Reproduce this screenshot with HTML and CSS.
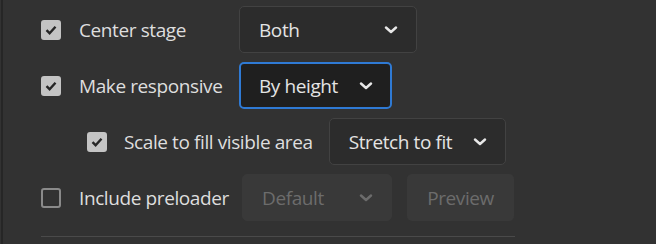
FILE: index.html
```html
<!DOCTYPE html>
<html lang="en">
<head>
    <meta charset="UTF-8">
    <meta name="viewport" content="width=device-width, initial-scale=1.0">
    <title>Publish Settings</title>
    <link rel="stylesheet" href="styles.css">
</head>
<body>
    <div class="panel">
        <div class="row">
            <span class="checkbox checked"><svg viewBox="0 0 12 10" width="12" height="10"><path d="M1.5 5.2 L4.6 8.2 L10.5 1.8" /></svg></span>
            <span class="label wide">Center stage</span>
            <div class="select w-both"><span>Both</span><svg class="chev" viewBox="0 0 14 8" width="14" height="8"><path d="M2 1.5 L7 6 L12 1.5" /></svg></div>
        </div>
        <div class="row">
            <span class="checkbox checked"><svg viewBox="0 0 12 10" width="12" height="10"><path d="M1.5 5.2 L4.6 8.2 L10.5 1.8" /></svg></span>
            <span class="label wide">Make responsive</span>
            <div class="select focused w-height"><span>By height</span><svg class="chev" viewBox="0 0 14 8" width="14" height="8"><path d="M2 1.5 L7 6 L12 1.5" /></svg></div>
        </div>
        <div class="row sub">
            <span class="checkbox checked"><svg viewBox="0 0 12 10" width="12" height="10"><path d="M1.5 5.2 L4.6 8.2 L10.5 1.8" /></svg></span>
            <span class="label">Scale to fill visible area</span>
            <div class="select w-stretch"><span>Stretch to fit</span><svg class="chev" viewBox="0 0 14 8" width="14" height="8"><path d="M2 1.5 L7 6 L12 1.5" /></svg></div>
        </div>
        <div class="row">
            <span class="checkbox"></span>
            <span class="label preload">Include preloader</span>
            <div class="select disabled w-default"><span>Default</span><svg class="chev" viewBox="0 0 14 8" width="14" height="8"><path d="M2 1.5 L7 6 L12 1.5" /></svg></div>
            <div class="button disabled">Preview</div>
        </div>
        <div class="divider"></div>
    </div>
</body>
</html>
```
FILE: styles.css
```css
body {
    margin: 0;
    background: #323232;
    font-family: "Open Sans", "Noto Sans", sans-serif;
    color: #dedede;
    height: 244px;
    overflow: hidden;
    border-left: 2px solid #262626;
    margin-left: 1px;
}
.panel {
    padding: 6px 0 0 38px;
    width: 474px;
}
.row {
    display: flex;
    align-items: center;
    height: 47px;
    margin-bottom: 9px;
}
.row.sub {
    padding-left: 46px;
}
.checkbox {
    width: 20px;
    height: 20px;
    box-sizing: border-box;
    border-radius: 3px;
    border: 2px solid #8a8a8a;
    display: flex;
    align-items: center;
    justify-content: center;
    flex-shrink: 0;
}
.checkbox.checked {
    background: #c4c4c4;
    border-color: #c4c4c4;
}
.checkbox svg path {
    fill: none;
    stroke: #262626;
    stroke-width: 2.4;
}
.label {
    font-size: 19px;
    letter-spacing: -0.4px;
    margin-left: 18px;
    white-space: nowrap;
}
.label.wide {
    width: 160px;
}
.row.sub .label {
    margin-left: 17px;
    margin-right: 16px;
}
.label.preload {
    width: 163px;
}
.select {
    height: 47px;
    box-sizing: border-box;
    border: 1px solid #424242;
    border-radius: 5px;
    background: #2c2c2c;
    display: flex;
    align-items: center;
    justify-content: space-between;
    padding: 0 18px 0 19px;
    font-size: 19px;
    letter-spacing: -0.4px;
    color: #e4e4e4;
}
.select .chev path {
    fill: none;
    stroke: #e8e8e8;
    stroke-width: 2.4;
    stroke-linecap: round;
    stroke-linejoin: round;
}
.select.focused {
    border: 2px solid #2f7ad4;
    background: #1f1f1f;
    padding-left: 18px;
    padding-right: 17px;
}
.select.disabled {
    border-color: #393939;
    background: #393939;
    color: #6c6c6c;
}
.select.disabled .chev path {
    stroke: #6c6c6c;
}
.w-both { width: 178px; }
.w-height { width: 153px; }
.w-stretch { width: 177px; }
.w-default { width: 150px; }
.button {
    height: 47px;
    width: 107px;
    box-sizing: border-box;
    margin-left: 15px;
    border-radius: 5px;
    display: flex;
    align-items: center;
    justify-content: center;
    font-size: 19px;
    letter-spacing: -0.4px;
}
.button.disabled {
    background: #393939;
    color: #6c6c6c;
}
.divider {
    height: 1px;
    background: #4a4a4a;
    margin-top: 15px;
}
```
